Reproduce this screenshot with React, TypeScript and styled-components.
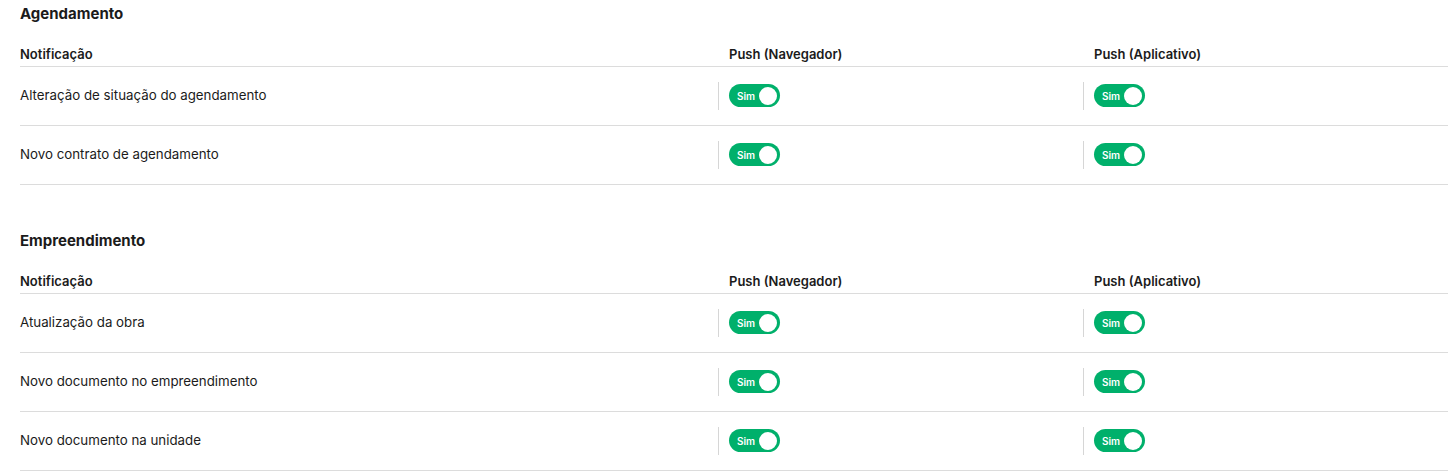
import React, { useState } from 'react';
import styled, { createGlobalStyle } from 'styled-components';

const GlobalStyle = createGlobalStyle`
  body {
    margin: 0;
    background: #ffffff;
    font-family: Inter, 'Noto Sans', sans-serif;
    color: #1b1b1b;
  }
`;

const Page = styled.div`
  padding: 0 5px 0 20px;
`;

const Section = styled.section`
  & + & {
    margin-top: 46px;
  }
`;

const SectionTitle = styled.h2`
  margin: 4px 0 18px;
  font-size: 15px;
  line-height: 20px;
  font-weight: 700;
`;

const Row = styled.div<{ header?: boolean }>`
  display: grid;
  grid-template-columns: 698px 365px 1fr;
  align-items: center;
  height: ${(p) => (p.header ? '24px' : '58px')};
  border-bottom: 1px solid #dcdcdc;
`;

const HeadCell = styled.div<{ pad?: boolean }>`
  font-size: 13px;
  font-weight: 600;
  line-height: 20px;
  padding-left: ${(p) => (p.pad ? '11px' : '0')};
`;

const Label = styled.div`
  font-size: 13.3px;
  line-height: 20px;
  margin-top: -2px;
`;

const ToggleCell = styled.div`
  display: flex;
  align-items: center;
  height: 28px;
  border-left: 1px solid #d6d6d6;
  padding-left: 10px;
`;

const Switch = styled.button<{ on: boolean }>`
  position: relative;
  width: 51px;
  height: 23px;
  border: none;
  border-radius: 12px;
  padding: 0 0 0 8px;
  background: ${(p) => (p.on ? '#00b06b' : '#bdbdbd')};
  color: #ffffff;
  font-family: Inter, sans-serif;
  font-size: 10px;
  font-weight: 600;
  text-align: left;
  cursor: pointer;
  margin-top: -1px;
`;

const Knob = styled.span`
  position: absolute;
  top: 2.5px;
  right: 3px;
  width: 18px;
  height: 18px;
  border-radius: 50%;
  background: #ffffff;
`;

const Toggle = () => {
  const [on, setOn] = useState(true);
  return (
    <ToggleCell>
      <Switch on={on} onClick={() => setOn(!on)}>
        {on ? 'Sim' : 'Não'}
        <Knob />
      </Switch>
    </ToggleCell>
  );
};

const groups = [
  {
    title: 'Agendamento',
    items: ['Alteração de situação do agendamento', 'Novo contrato de agendamento'],
  },
  {
    title: 'Empreendimento',
    items: ['Atualização da obra', 'Novo documento no empreendimento', 'Novo documento na unidade'],
  },
];

export default function App() {
  return (
    <Page>
      <GlobalStyle />
      {groups.map((g) => (
        <Section key={g.title}>
          <SectionTitle>{g.title}</SectionTitle>
          <Row header>
            <HeadCell>Notificação</HeadCell>
            <HeadCell pad>Push (Navegador)</HeadCell>
            <HeadCell pad>Push (Aplicativo)</HeadCell>
          </Row>
          {g.items.map((item) => (
            <Row key={item}>
              <Label>{item}</Label>
              <Toggle />
              <Toggle />
            </Row>
          ))}
        </Section>
      ))}
    </Page>
  );
}
